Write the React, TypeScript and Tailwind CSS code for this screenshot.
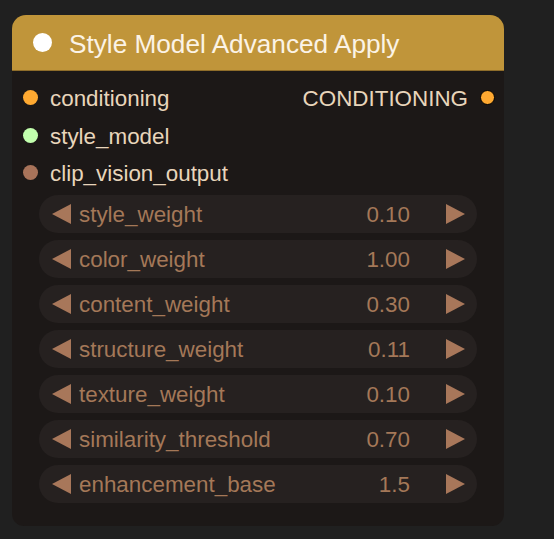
const inputs = [
  { name: "conditioning", color: "bg-[#ffa931]" },
  { name: "style_model", color: "bg-[#c2ffae]" },
  { name: "clip_vision_output", color: "bg-[#a8735a]" },
];

const widgets = [
  { name: "style_weight", value: "0.10" },
  { name: "color_weight", value: "1.00" },
  { name: "content_weight", value: "0.30" },
  { name: "structure_weight", value: "0.11" },
  { name: "texture_weight", value: "0.10" },
  { name: "similarity_threshold", value: "0.70" },
  { name: "enhancement_base", value: "1.5" },
];

function Arrow({ dir }: { dir: "left" | "right" }) {
  return (
    <svg width="19" height="20" viewBox="0 0 19 20" className="shrink-0">
      <polygon
        points={dir === "left" ? "19,0 19,20 0,10" : "0,0 0,20 19,10"}
        fill="#a8775a"
      />
    </svg>
  );
}

function NumberWidget({ name, value }: { name: string; value: string }) {
  return (
    <div className="flex h-[38px] items-center rounded-full bg-[#262120] pl-[13px] pr-[12px] text-[22.4px] text-[#a47858]">
      <Arrow dir="left" />
      <span className="ml-[8px] flex-1 pt-[3px] leading-none">{name}</span>
      <span className="pt-[3px] leading-none">{value}</span>
      <span className="ml-[36px]">
        <Arrow dir="right" />
      </span>
    </div>
  );
}

export default function App() {
  return (
    <div
      className="min-h-[539px] w-full bg-[#202020] pt-[15px] pl-[12px]"
      style={{ fontFamily: '"Liberation Sans", Arial, sans-serif' }}
    >
      <div className="w-[492px] overflow-hidden rounded-t-[14px] rounded-b-[12px] bg-[#1c1817]">
        <div className="flex h-[56px] items-center border-b border-[#8f6d2a] bg-[#c0953a] pl-[21px]">
          <span className="h-[19px] w-[19px] shrink-0 rounded-full bg-white" />
          <span className="ml-[17px] pt-[3px] text-[26.2px] leading-none text-[#fbf3e6]">
            Style Model Advanced Apply
          </span>
        </div>

        <div className="flex flex-col pt-[8px]">
          {inputs.map((inp, i) => (
            <div key={inp.name} className="flex h-[37.5px] items-center pl-[11px] pr-[9px]">
              <span className={`h-[15px] w-[15px] shrink-0 rounded-full ${inp.color}`} />
              <span className="ml-[12px] flex-1 pt-[3px] text-[22.4px] leading-none text-[#e8d5bb]">
                {inp.name}
              </span>
              {i === 0 && (
                <>
                  <span className="pt-[3px] text-[22.4px] leading-none text-[#e8d5bb]">CONDITIONING</span>
                  <span className="ml-[12px] h-[15px] w-[15px] shrink-0 rounded-full border-[1.5px] border-black bg-[#ffa931]" />
                </>
              )}
            </div>
          ))}
        </div>

        <div className="flex flex-col gap-[7px] px-[27px] pt-[3px] pb-[23px]">
          {widgets.map((w) => (
            <NumberWidget key={w.name} name={w.name} value={w.value} />
          ))}
        </div>
      </div>
    </div>
  );
}
